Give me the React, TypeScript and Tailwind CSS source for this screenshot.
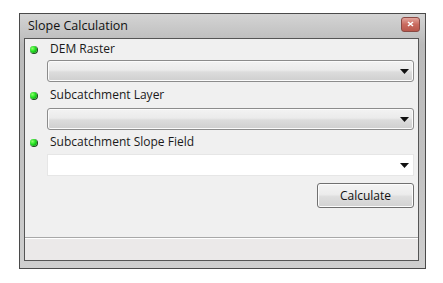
import React from "react";

const font = { fontFamily: '"Open Sans", "Liberation Sans", sans-serif' };

function Dot() {
  return (
    <div className="w-[7px] h-[7px] rounded-full bg-[radial-gradient(circle_at_35%_35%,#8cff6a_0%,#22e022_45%,#0a7a0a_100%)] shadow-[0.5px_0.5px_0_0.5px_#1a4a1a]" />
  );
}

function Label({ text }: { text: string }) {
  return (
    <div className="flex items-center h-[18px] pl-[5px] gap-[13px]">
      <Dot />
      <span className="text-[12px] text-[#1a1a1a] leading-none">{text}</span>
    </div>
  );
}

function Arrow() {
  return (
    <svg width="9" height="5" viewBox="0 0 9 5">
      <path d="M0 0 H9 L4.5 5 Z" fill="#111" />
    </svg>
  );
}

function Combo({ white }: { white?: boolean }) {
  return (
    <div
      className={
        white
          ? "ml-[22px] mr-[4px] h-[22px] bg-white border border-[#e6e6e6] flex items-center justify-end pr-[4px]"
          : "ml-[22px] mr-[4px] h-[22px] rounded-[3px] border border-[#8c8c8c] bg-[linear-gradient(#f3f3f3_0%,#ebebeb_45%,#dcdcdc_55%,#cfcfcf_100%)] shadow-[inset_0_0_0_1px_#fbfbfb] flex items-center justify-end pr-[4px]"
      }
    >
      <Arrow />
    </div>
  );
}

export default function App() {
  return (
    <div className="w-[443px] h-[283px] bg-white pt-[13px] pl-[19px]" style={font}>
      <div className="w-[407px] h-[256px] border border-[#4a4a4a] bg-[linear-gradient(#d4d4d4,#bababa_12%,#c2c2c2_60%,#cfcfcf)] flex flex-col pl-[4px] pr-[6px] pb-[7px]">
        <div className="h-[24px] flex items-center justify-between shrink-0">
          <span className="text-[12.5px] text-[#111] pl-[4px] pt-[1px] leading-none">Slope Calculation</span>
          <div className="w-[19px] h-[15px] mt-[-4px] mr-[-1px] rounded-[3px] border border-[#8a4a44] bg-[linear-gradient(#e3a59c,#c96a5e_50%,#b9584c)] flex items-center justify-center">
            <svg width="7" height="6" viewBox="0 0 7 6">
              <path d="M1 1 L6 5 M6 1 L1 5" stroke="#fff" strokeWidth="1.6" />
            </svg>
          </div>
        </div>
        <div className="flex-1 border border-[#555] bg-[#f0f0f0] flex flex-col">
          <div className="pt-[1px]">
            <Label text="DEM Raster" />
          </div>
          <div className="mt-[2px]">
            <Combo />
          </div>
          <div className="mt-[4px]">
            <Label text="Subcatchment Layer" />
          </div>
          <div className="mt-[4px]">
            <Combo />
          </div>
          <div className="mt-[3px]">
            <Label text="Subcatchment Slope Field" />
          </div>
          <div className="mt-[3px]">
            <Combo white />
          </div>
          <div className="flex justify-end mt-[7px] mr-[4px]">
            <div className="w-[97px] h-[25px] rounded-[3px] border border-[#707070] bg-[linear-gradient(#f4f4f4_0%,#ececec_45%,#dedede_55%,#d2d2d2_100%)] shadow-[inset_0_0_0_1px_#fcfcfc] flex items-center justify-center text-[12px] text-[#111]">
              Calculate
            </div>
          </div>
          <div className="flex-1" />
          <div className="h-[23px] border-t border-[#a8a8a8] bg-[#ebe9e9] shadow-[inset_0_1px_0_#fff]" />
        </div>
      </div>
    </div>
  );
}
